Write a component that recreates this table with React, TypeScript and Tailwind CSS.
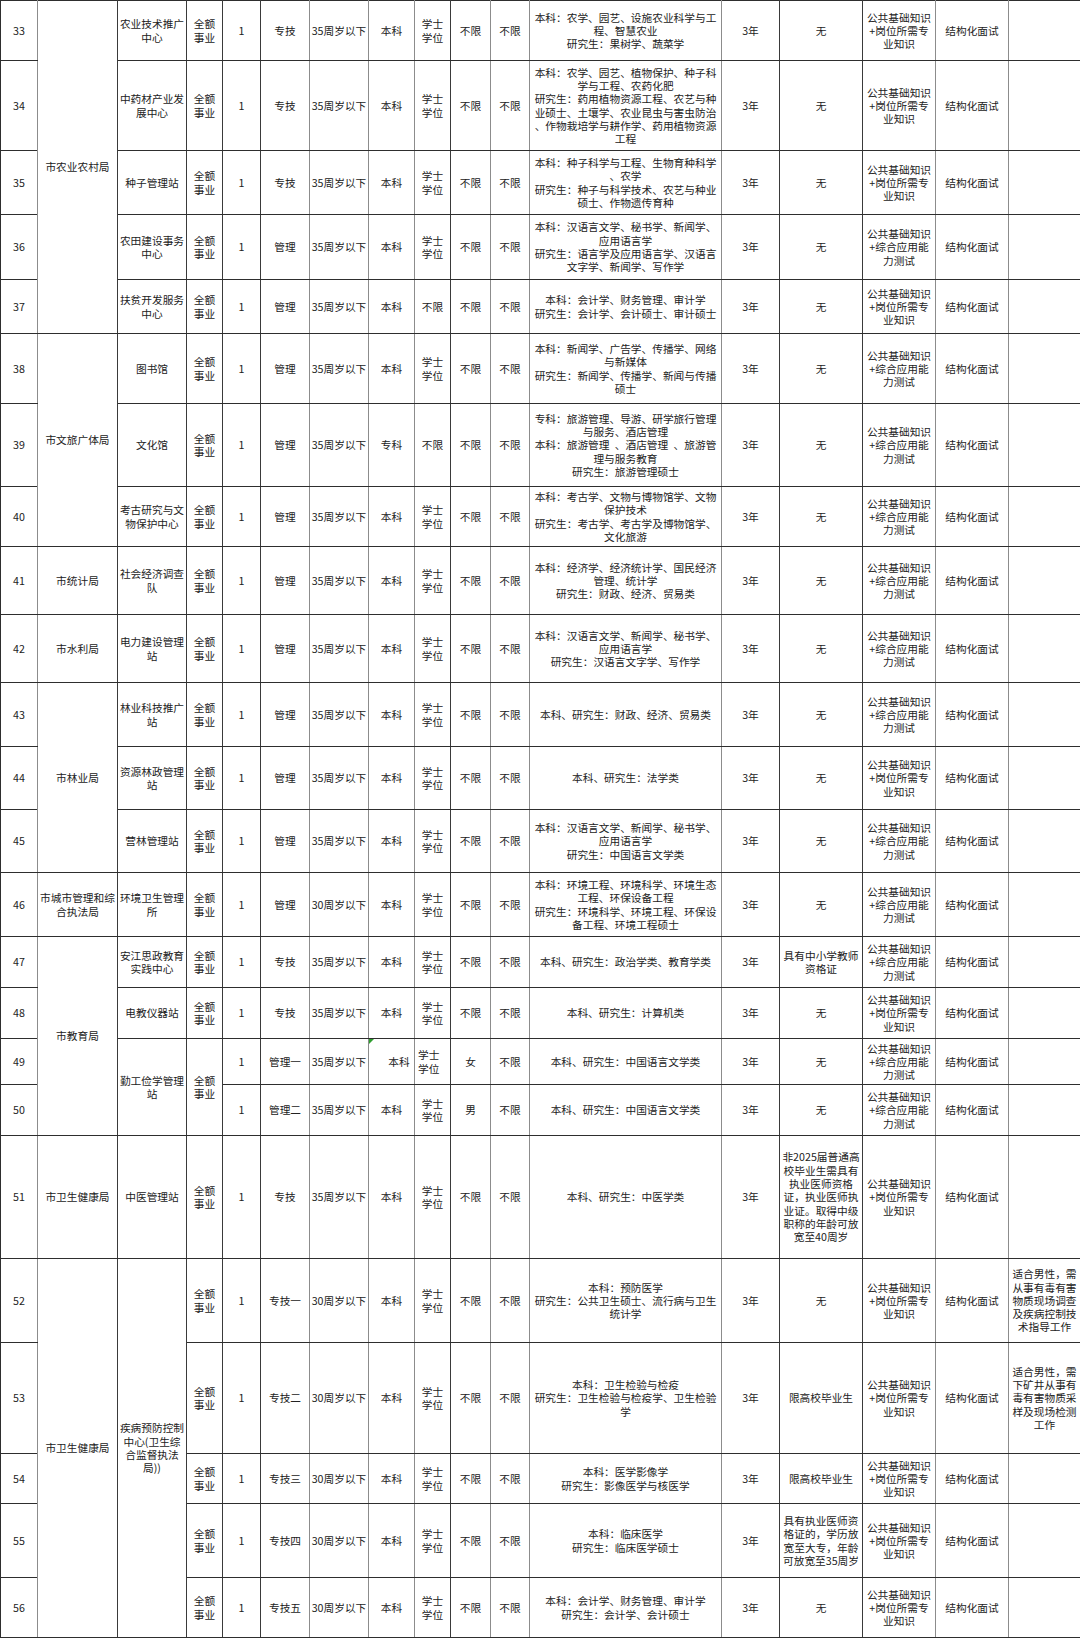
type Cell = [number, string, number?, string?];

const QE = "全额\n事业";
const XW = "学士\n学位";
const A35 = "35周岁以下";
const A30 = "30周岁以下";
const GW = "公共基础知识\n+岗位所需专\n业知识";
const ZH = "公共基础知识\n+综合应用能\n力测试";

// line to the right of each column
const rightLine = [
  "border-r-[#8c8c8c]",
  "border-r-[#3a3a3a]",
  "border-r-[#3a3a3a]",
  "border-r-[#3a3a3a]",
  "border-r-[#3a3a3a]",
  "border-r-[#8c8c8c]",
  "border-r-[#8c8c8c]",
  "border-r-[#8c8c8c]",
  "border-r-[#3a3a3a]",
  "border-r-[#8c8c8c]",
  "border-r-[#8c8c8c]",
  "border-r-[#8c8c8c]",
  "border-r-[#3a3a3a]",
  "border-r-[#3a3a3a]",
  "border-r-[#8c8c8c]",
  "border-r-[#8c8c8c]",
  "border-r-[#2e2e2e]",
];

const colWidths = [
  "w-[37px]",
  "w-[80px]",
  "w-[69px]",
  "w-[36px]",
  "w-[38px]",
  "w-[49px]",
  "w-[59px]",
  "w-[46px]",
  "w-[36px]",
  "w-[40px]",
  "w-[39px]",
  "w-[192px]",
  "w-[58px]",
  "w-[83px]",
  "w-[73px]",
  "w-[73px]",
  "w-[72px]",
];

function post(
  type: string,
  age: string,
  edu: string,
  degree: string,
  major: string,
  cond: string,
  exam: string,
  note = "",
  sex = "不限"
): Cell[] {
  return [
    [4, "1"],
    [5, type],
    [6, age],
    [7, edu],
    [8, degree],
    [9, sex],
    [10, "不限"],
    [11, major],
    [12, "3年"],
    [13, cond],
    [14, exam],
    [15, "结构化面试"],
    [16, note],
  ];
}

const rows: { h: string; cells: Cell[] }[] = [
  {
    h: "h-[60px]",
    cells: [
      [0, "33"],
      [1, "市农业农村局", 5],
      [2, "农业技术推广\n中心"],
      [3, QE],
      ...post("专技", A35, "本科", XW, "本科：农学、园艺、设施农业科学与工\n程、智慧农业\n研究生：果树学、蔬菜学", "无", GW),
    ],
  },
  {
    h: "h-[90px]",
    cells: [
      [0, "34"],
      [2, "中药材产业发\n展中心"],
      [3, QE],
      ...post(
        "专技",
        A35,
        "本科",
        XW,
        "本科：农学、园艺、植物保护、种子科\n学与工程、农药化肥\n研究生：药用植物资源工程、农艺与种\n业硕士、土壤学、农业昆虫与害虫防治\n、作物栽培学与耕作学、药用植物资源\n工程",
        "无",
        GW
      ),
    ],
  },
  {
    h: "h-[64px]",
    cells: [
      [0, "35"],
      [2, "种子管理站"],
      [3, QE],
      ...post(
        "专技",
        A35,
        "本科",
        XW,
        "本科：种子科学与工程、生物育种科学\n、农学\n研究生：种子与科学技术、农艺与种业\n硕士、作物遗传育种",
        "无",
        GW
      ),
    ],
  },
  {
    h: "h-[65px]",
    cells: [
      [0, "36"],
      [2, "农田建设事务\n中心"],
      [3, QE],
      ...post(
        "管理",
        A35,
        "本科",
        XW,
        "本科：汉语言文学、秘书学、新闻学、\n应用语言学\n研究生：语言学及应用语言学、汉语言\n文字学、新闻学、写作学",
        "无",
        ZH
      ),
    ],
  },
  {
    h: "h-[54px]",
    cells: [
      [0, "37"],
      [2, "扶贫开发服务\n中心"],
      [3, QE],
      ...post("管理", A35, "本科", "不限", "本科：会计学、财务管理、审计学\n研究生：会计学、会计硕士、审计硕士", "无", GW),
    ],
  },
  {
    h: "h-[70px]",
    cells: [
      [0, "38"],
      [1, "市文旅广体局", 3],
      [2, "图书馆"],
      [3, QE],
      ...post(
        "管理",
        A35,
        "本科",
        XW,
        "本科：新闻学、广告学、传播学、网络\n与新媒体\n研究生：新闻学、传播学、新闻与传播\n硕士",
        "无",
        ZH
      ),
    ],
  },
  {
    h: "h-[83px]",
    cells: [
      [0, "39"],
      [2, "文化馆"],
      [3, QE],
      ...post(
        "管理",
        A35,
        "专科",
        "不限",
        "专科：旅游管理、导游、研学旅行管理\n与服务、酒店管理\n本科：旅游管理\u2002、酒店管理\u2002、旅游管\n理与服务教育\n研究生：旅游管理硕士",
        "无",
        ZH
      ),
    ],
  },
  {
    h: "h-[60px]",
    cells: [
      [0, "40"],
      [2, "考古研究与文\n物保护中心"],
      [3, QE],
      ...post(
        "管理",
        A35,
        "本科",
        XW,
        "本科：考古学、文物与博物馆学、文物\n保护技术\n研究生：考古学、考古学及博物馆学、\n文化旅游",
        "无",
        ZH
      ),
    ],
  },
  {
    h: "h-[68px]",
    cells: [
      [0, "41"],
      [1, "市统计局"],
      [2, "社会经济调查\n队"],
      [3, QE],
      ...post("管理", A35, "本科", XW, "本科：经济学、经济统计学、国民经济\n管理、统计学\n研究生：财政、经济、贸易类", "无", ZH),
    ],
  },
  {
    h: "h-[68px]",
    cells: [
      [0, "42"],
      [1, "市水利局"],
      [2, "电力建设管理\n站"],
      [3, QE],
      ...post("管理", A35, "本科", XW, "本科：汉语言文学、新闻学、秘书学、\n应用语言学\n研究生：汉语言文字学、写作学", "无", ZH),
    ],
  },
  {
    h: "h-[64px]",
    cells: [
      [0, "43"],
      [1, "市林业局", 3],
      [2, "林业科技推广\n站"],
      [3, QE],
      ...post("管理", A35, "本科", XW, "本科、研究生：财政、经济、贸易类", "无", ZH),
    ],
  },
  {
    h: "h-[63px]",
    cells: [
      [0, "44"],
      [2, "资源林政管理\n站"],
      [3, QE],
      ...post("管理", A35, "本科", XW, "本科、研究生：法学类", "无", GW),
    ],
  },
  {
    h: "h-[63px]",
    cells: [
      [0, "45"],
      [2, "营林管理站"],
      [3, QE],
      ...post("管理", A35, "本科", XW, "本科：汉语言文学、新闻学、秘书学、\n应用语言学\n研究生：中国语言文学类", "无", ZH),
    ],
  },
  {
    h: "h-[64px]",
    cells: [
      [0, "46"],
      [1, "市城市管理和综\n合执法局"],
      [2, "环境卫生管理\n所"],
      [3, QE],
      ...post(
        "管理",
        A30,
        "本科",
        XW,
        "本科：环境工程、环境科学、环境生态\n工程、环保设备工程\n研究生：环境科学、环境工程、环保设\n备工程、环境工程硕士",
        "无",
        ZH
      ),
    ],
  },
  {
    h: "h-[51px]",
    cells: [
      [0, "47"],
      [1, "市教育局", 4],
      [2, "安江思政教育\n实践中心"],
      [3, QE],
      ...post("专技", A35, "本科", XW, "本科、研究生：政治学类、教育学类", "具有中小学教师\n资格证", ZH),
    ],
  },
  {
    h: "h-[51px]",
    cells: [
      [0, "48"],
      [2, "电教仪器站"],
      [3, QE],
      ...post("专技", A35, "本科", XW, "本科、研究生：计算机类", "无", GW),
    ],
  },
  {
    h: "h-[46px]",
    cells: [
      [0, "49"],
      [2, "勤工俭学管理\n站", 2],
      [3, QE, 2],
      ...post("管理一", A35, "本科", XW, "本科、研究生：中国语言文学类", "无", ZH, "", "女").map(
        (c): Cell => (c[0] === 7 ? [7, c[1], 1, "mark"] : c[0] === 8 ? [8, c[1], 1, "left"] : c)
      ),
    ],
  },
  {
    h: "h-[51px]",
    cells: [[0, "50"], ...post("管理二", A35, "本科", XW, "本科、研究生：中国语言文学类", "无", ZH, "", "男")],
  },
  {
    h: "h-[123px]",
    cells: [
      [0, "51"],
      [1, "市卫生健康局"],
      [2, "中医管理站"],
      [3, QE],
      ...post(
        "专技",
        A35,
        "本科",
        XW,
        "本科、研究生：中医学类",
        "非2025届普通高\n校毕业生需具有\n执业医师资格\n证，执业医师执\n业证。取得中级\n职称的年龄可放\n宽至40周岁",
        GW
      ),
    ],
  },
  {
    h: "h-[84px]",
    cells: [
      [0, "52"],
      [1, "市卫生健康局", 5],
      [2, "疾病预防控制\n中心(卫生综\n合监督执法\n局))", 5],
      [3, QE],
      ...post(
        "专技一",
        A30,
        "本科",
        XW,
        "本科：预防医学\n研究生：公共卫生硕士、流行病与卫生\n统计学",
        "无",
        GW,
        "适合男性，需\n从事有毒有害\n物质现场调查\n及疾病控制技\n术指导工作"
      ),
    ],
  },
  {
    h: "h-[111px]",
    cells: [
      [0, "53"],
      [3, QE],
      ...post(
        "专技二",
        A30,
        "本科",
        XW,
        "本科：卫生检验与检疫\n研究生：卫生检验与检疫学、卫生检验\n学",
        "限高校毕业生",
        GW,
        "适合男性，需\n下矿井从事有\n毒有害物质采\n样及现场检测\n工作"
      ),
    ],
  },
  {
    h: "h-[50px]",
    cells: [
      [0, "54"],
      [3, QE],
      ...post("专技三", A30, "本科", XW, "本科：医学影像学\n研究生：影像医学与核医学", "限高校毕业生", GW),
    ],
  },
  {
    h: "h-[74px]",
    cells: [
      [0, "55"],
      [3, QE],
      ...post(
        "专技四",
        A30,
        "本科",
        XW,
        "本科：临床医学\n研究生：临床医学硕士",
        "具有执业医师资\n格证的，学历放\n宽至大专，年龄\n可放宽至35周岁",
        GW
      ),
    ],
  },
  {
    h: "h-[60px]",
    cells: [
      [0, "56"],
      [3, QE],
      ...post("专技五", A30, "本科", XW, "本科：会计学、财务管理、审计学\n研究生：会计学、会计硕士", "无", GW),
    ],
  },
];

export default function App() {
  return (
    <div className="w-[1080px] bg-white font-['Noto_Sans_CJK_SC','Noto_Sans',sans-serif] text-[10.7px] leading-[13.3px] text-[#222]">
      <table className="w-[1080px] table-fixed border-collapse">
        <colgroup>
          {colWidths.map((w, i) => (
            <col key={i} className={w} />
          ))}
        </colgroup>
        <tbody>
          {rows.map((row, ri) => (
            <tr key={ri} className={row.h}>
              {row.cells.map(([col, text, span, flag]) => {
                let cls =
                  "border border-[#8c8c8c] border-y-[#2e2e2e] p-0 align-middle whitespace-pre " + rightLine[col];
                if (col === 0) cls += " border-l-[#2e2e2e]";
                if (flag === "mark") cls += " relative pl-[15px] text-center";
                else if (flag === "left") cls += " pl-[3px] text-left";
                else cls += " text-center";
                return (
                  <td key={col} rowSpan={span ?? 1} className={cls}>
                    {flag === "mark" && (
                      <span className="absolute left-0 top-0 h-0 w-0 border-r-[5px] border-t-[5px] border-r-transparent border-t-[#2e9e2e]" />
                    )}
                    {text}
                  </td>
                );
              })}
            </tr>
          ))}
        </tbody>
      </table>
    </div>
  );
}
